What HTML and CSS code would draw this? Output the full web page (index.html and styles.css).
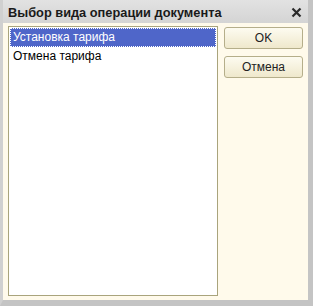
FILE: index.html
```html
<!DOCTYPE html>
<html lang="ru">
<head>
    <meta charset="UTF-8">
    <title>Выбор вида операции документа</title>
    <link rel="stylesheet" href="styles.css">
</head>
<body>
    <div class="window">
        <div class="titlebar">
            <span class="title">Выбор вида операции документа</span>
            <svg class="close" width="11" height="11" viewBox="0 0 11 11">
                <path d="M1.5 1.5 L9.5 9.5 M9.5 1.5 L1.5 9.5" stroke="#2a2a2a" stroke-width="2.2" fill="none"/>
            </svg>
        </div>
        <div class="content">
            <div class="list">
                <div class="item selected">Установка тарифа</div>
                <div class="item">Отмена тарифа</div>
            </div>
            <div class="buttons">
                <button class="btn">OK</button>
                <button class="btn">Отмена</button>
            </div>
        </div>
    </div>
</body>
</html>
```

FILE: styles.css
```css
body {
    margin: 0;
    background: #fff;
    font-family: "Liberation Sans", Arial, sans-serif;
}
.window {
    width: 313px;
    height: 306px;
    box-sizing: border-box;
    display: flex;
    flex-direction: column;
    background: #d6d6d6;
    border-left: 3px solid #d0d0d0;
    border-right: 5px solid #c4c4c4;
    border-bottom: 6px solid #c4c4c4;
}
.titlebar {
    height: 23px;
    display: flex;
    align-items: center;
    justify-content: space-between;
    padding: 2px 6px 0 5px;
    box-sizing: border-box;
    background: linear-gradient(#e2e2e2, #d4d4d4);
}
.title {
    font-weight: bold;
    font-size: 12.8px;
    color: #1a1a1a;
}
.close {
    display: block;
}
.content {
    flex: 1;
    display: flex;
    gap: 6px;
    padding: 3px 4px 4px 5px;
    background: #fffaeb;
}
.list {
    width: 210px;
    background: #fff;
    border: 1px solid #a9a47c;
    padding: 1px;
    box-sizing: border-box;
}
.item {
    font-size: 12px;
    height: 19px;
    line-height: 19px;
    padding-left: 3px;
    color: #000;
}
.item.selected {
    background: #4f66c9;
    color: #fff;
    outline: 1px dotted #fff;
    outline-offset: -1px;
}
.buttons {
    display: flex;
    flex-direction: column;
    gap: 7px;
    padding-top: 1px;
}
.btn {
    width: 79px;
    height: 22px;
    font-family: "Liberation Sans", Arial, sans-serif;
    font-size: 12px;
    color: #222;
    background: linear-gradient(#fdfbf0, #efe8cc);
    border: 1px solid #b5ae8a;
    border-radius: 3px;
    padding: 0;
}
```
